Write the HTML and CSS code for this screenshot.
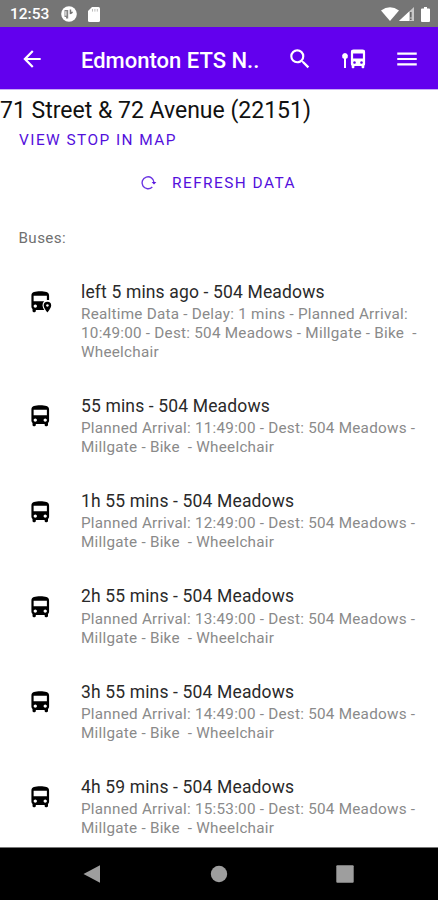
FILE: index.html
```html
<!DOCTYPE html>
<html lang="en">
<head>
<meta charset="utf-8">
<title>Edmonton ETS</title>
<link rel="stylesheet" href="styles.css">
</head>
<body>
<svg class="defs" width="0" height="0">
  <symbol id="bus" viewBox="0 0 24 24"><path d="M4 16c0 .88.39 1.67 1 2.22V20c0 .55.45 1 1 1h1c.55 0 1-.45 1-1v-1h8v1c0 .55.45 1 1 1h1c.55 0 1-.45 1-1v-1.780c.61-.55 1-1.340 1-2.220V6c0-3.500-3.580-4-8-4s-8 .5-8 4v10zm3.500 1c-.83 0-1.500-.67-1.500-1.500S6.670 14 7.500 14s1.500.67 1.500 1.500S8.330 17 7.500 17zm9 0c-.83 0-1.500-.67-1.500-1.500s.67-1.500 1.500-1.500 1.500.67 1.500 1.500-.67 1.500-1.500 1.500zM18 11H6V6h12v5z"/></symbol>
</svg>
<div class="phone">
  <div class="status">
    <span class="time">12:53</span>
    <svg class="app" viewBox="0 0 16 16"><circle cx="8" cy="8" r="7.800" fill="#fff"/><path d="M3.500 4h3.700v8.500H5V11H3.500z" fill="#858585"/><path d="M4.900 5.200v4.500" stroke="#fff" stroke-width="1"/><path d="M8.700 3.500h1.500v2.200H12q-.3 2.400-3.300 2.600z" fill="#757575"/></svg>
    <svg class="sd" viewBox="0 0 12 15"><path fill="#fff" d="M4 0h6.500Q12 0 12 1.500v12q0 1.500-1.500 1.500h-9Q0 15 0 13.500V4z"/><path d="M4.500 2v2.600M6.900 2v2.600M9.300 2v2.600" stroke="#bbb"/></svg>
    <span class="spacer"></span>
    <svg class="wifi" viewBox="0 0 18 14"><path fill="#fff" d="M0 3.500Q9-3 18 3.500L9 14z"/></svg>
    <svg class="signal" viewBox="0 0 15 14"><path fill="#c9c9c9" d="M0 14 15 0v14z"/><path fill="#fff" d="M0 14 10 4.700V14z"/><path d="M11.800 5v5.500M11.800 11.500v1.500" stroke="#666" stroke-width="1.600"/></svg>
    <svg class="battery" viewBox="0 0 9 15"><path fill="#fff" d="M3 0h3v1.500h2q1 0 1 1V14q0 1-1 1H1q-1 0-1-1V2.500q0-1 1-1h2z"/></svg>
  </div>
  <header class="bar">
    <svg class="ic back" viewBox="0 0 24 24"><path d="M20 11H7.830l5.590-5.590L12 4l-8 8 8 8 1.410-1.410L7.830 13H20v-2z"/></svg>
    <h1>Edmonton ETS N..</h1>
    <svg class="ic search" viewBox="0 0 24 24"><path d="M15.500 14h-.79l-.28-.27A6.471 6.471 0 0 0 16 9.500 6.500 6.500 0 1 0 9.500 16c1.610 0 3.090-.59 4.230-1.570l.27.28v.79l5 4.990L20.490 19l-4.990-5zm-6 0C7.010 14 5 11.990 5 9.500S7.010 5 9.500 5 14 7.010 14 9.500 11.990 14 9.500 14z"/></svg>
    <svg class="ic stop" viewBox="0 0 24 20"><path d="M3.500 4a3 3 0 0 1 1 5.800V19H2.500V9.800a3 3 0 0 1 1-5.800z"/><path fill-rule="evenodd" d="M12 .6h9Q23.600.6 23.600 3v12q0 1.200-.8 1.800v1.400q0 1-1 1h-.7q-1 0-1-1v-1.100h-7.200v1.100q0 1-1 1h-.7q-1 0-1-1v-1.400q-.8-.6-.8-1.800V3Q9.400.6 12 .6zM11.600 4.400v5.200h9.800V4.400zM13 12.200a1.300 1.300 0 1 0 .01 0zM20 12.200a1.300 1.300 0 1 0 .01 0z"/></svg>
    <svg class="ic menu" viewBox="0 0 24 24"><path d="M3 18h18v-2H3v2zm0-5h18v-2H3v2zm0-7v2h18V6H3z"/></svg>
  </header>
  <main>
    <h2>71 Street &amp; 72 Avenue (22151)</h2>
    <div class="btn view">VIEW STOP IN MAP</div>
    <div class="btn refresh">
      <svg viewBox="0 0 17 16"><path d="M14 7.500A6 6 0 1 0 12.300 12" fill="none" stroke="#6a35e2" stroke-width="1.400"/><path d="M11.600 6.900h4.800l-2.400 2.700z" fill="#5a16e0"/></svg>
      <span>REFRESH DATA</span>
    </div>
    <div class="label">Buses:</div>
    <ul>
      <li>
        <svg class="bus" viewBox="0 0 24 24"><path fill-rule="evenodd" d="M4 16V6c0-3.500 3.580-4 8-4s8 .5 8 4v4h-2V6H6v5h9.500q-1.800 1.800-1.500 4 .2 1.800 1.600 4H8v1q0 1-1 1H6q-1 0-1-1v-1.780Q4 17.300 4 16zm3.500-2a1.500 1.500 0 1 0 .01 0z"/><path fill-rule="evenodd" d="M18.500 11.500a3.400 3.400 0 0 1 3.400 3.400c0 2.300-3.400 6.300-3.400 6.300s-3.400-4-3.400-6.300a3.400 3.400 0 0 1 3.400-3.400zm0 2.200a1.200 1.200 0 1 0 .01 0z"/></svg>
        <div><h3>left 5 mins ago - 504 Meadows</h3><p>Realtime Data - Delay: 1 mins - Planned Arrival:<br>10:49:00 - Dest: 504 Meadows - Millgate - Bike &nbsp;-<br>Wheelchair</p></div>
      </li>
      <li><svg class="bus"><use href="#bus"/></svg><div><h3>55 mins - 504 Meadows</h3><p>Planned Arrival: 11:49:00 - Dest: 504 Meadows -<br>Millgate - Bike &nbsp;- Wheelchair</p></div></li>
      <li><svg class="bus"><use href="#bus"/></svg><div><h3>1h 55 mins - 504 Meadows</h3><p>Planned Arrival: 12:49:00 - Dest: 504 Meadows -<br>Millgate - Bike &nbsp;- Wheelchair</p></div></li>
      <li><svg class="bus"><use href="#bus"/></svg><div><h3>2h 55 mins - 504 Meadows</h3><p>Planned Arrival: 13:49:00 - Dest: 504 Meadows -<br>Millgate - Bike &nbsp;- Wheelchair</p></div></li>
      <li><svg class="bus"><use href="#bus"/></svg><div><h3>3h 55 mins - 504 Meadows</h3><p>Planned Arrival: 14:49:00 - Dest: 504 Meadows -<br>Millgate - Bike &nbsp;- Wheelchair</p></div></li>
      <li><svg class="bus"><use href="#bus"/></svg><div><h3>4h 59 mins - 504 Meadows</h3><p>Planned Arrival: 15:53:00 - Dest: 504 Meadows -<br>Millgate - Bike &nbsp;- Wheelchair</p></div></li>
    </ul>
  </main>
  <nav>
    <svg viewBox="0 0 18 18"><path d="M17 .3v17.400L.5 9z"/></svg>
    <svg viewBox="0 0 18 18"><circle cx="9" cy="9" r="8.200"/></svg>
    <svg viewBox="0 0 18 18"><rect x=".3" y=".3" width="17.400" height="17.400" rx="1"/></svg>
  </nav>
</div>
</body>
</html>
```
FILE: styles.css
```css
* { box-sizing: border-box; margin: 0; padding: 0; }
body { font-family: Roboto, sans-serif; background: #fff; overflow: hidden; }
svg { display: block; flex: none; }
.defs { display: none; }
.phone { width: 438px; height: 900px; display: flex; flex-direction: column; }

.status { height: 27px; flex: none; background: #757575; display: flex; align-items: center; padding: 1px 8px 0 10px; color: #fff; }
.time { font-size: 15.500px; font-weight: 500; width: 51px; }
.app { width: 16px; height: 16px; }
.sd { width: 12px; height: 15px; margin-left: 11px; }
.spacer { flex: 1; }
.wifi { width: 18px; height: 14px; }
.signal { width: 15px; height: 14px; }
.battery { width: 9px; height: 15px; margin-left: 7px; }

.bar { height: 63px; flex: none; background: #6200ee; border-bottom: 1px solid #c9adf5; display: flex; align-items: center; padding: 1px 18px 0 19px; }
.ic { width: 26px; height: 26px; fill: #fff; }
h1 { width: 188px; margin-left: 36px; padding-top: 3px; font-size: 22px; font-weight: 500; color: #fff; white-space: nowrap; }
.search { margin-left: 19px; }
.stop { width: 25px; height: 20px; margin-left: 28px; }
.menu { margin-left: 28px; }

main { flex: 1; min-height: 0; overflow: hidden; }
h2 { font-size: 23px; font-weight: 400; line-height: 28px; padding-top: 7px; height: 37px; color: #111; white-space: nowrap; }
.btn { color: #5410dc; font-size: 15.400px; font-weight: 400; letter-spacing: 1.450px; line-height: 20px; }
.view { margin: 3px 0 0 19px; }
.refresh { display: flex; align-items: center; margin: 23px 0 0 140px; gap: 15px; }
.refresh svg { width: 17px; height: 16px; }
.label { margin: 35px 0 0 18.500px; font-size: 15.200px; letter-spacing: .4px; line-height: 20px; color: #707070; }
ul { list-style: none; padding-top: 33px; }
li { display: flex; align-items: flex-start; padding: 0 0 33.200px 27.200px; }
.bus { width: 26.500px; height: 26.500px; margin: 8.300px 27.300px 0 0; fill: #000; }
h3 { margin-top: -.2px; font-size: 17.500px; font-weight: 400; line-height: 22px; letter-spacing: .15px; color: #2a2a2a; white-space: nowrap; }
p { margin-top: 2.200px; font-size: 15.250px; font-weight: 400; line-height: 19px; letter-spacing: .25px; color: #8a8a8a; white-space: nowrap; }

nav { height: 53px; flex: none; background: #000; border-top: 1px solid #777; display: flex; justify-content: space-between; align-items: center; padding: 0 84px 0 83px; }
nav svg { width: 18px; height: 18px; fill: #9e9e9e; }
```
